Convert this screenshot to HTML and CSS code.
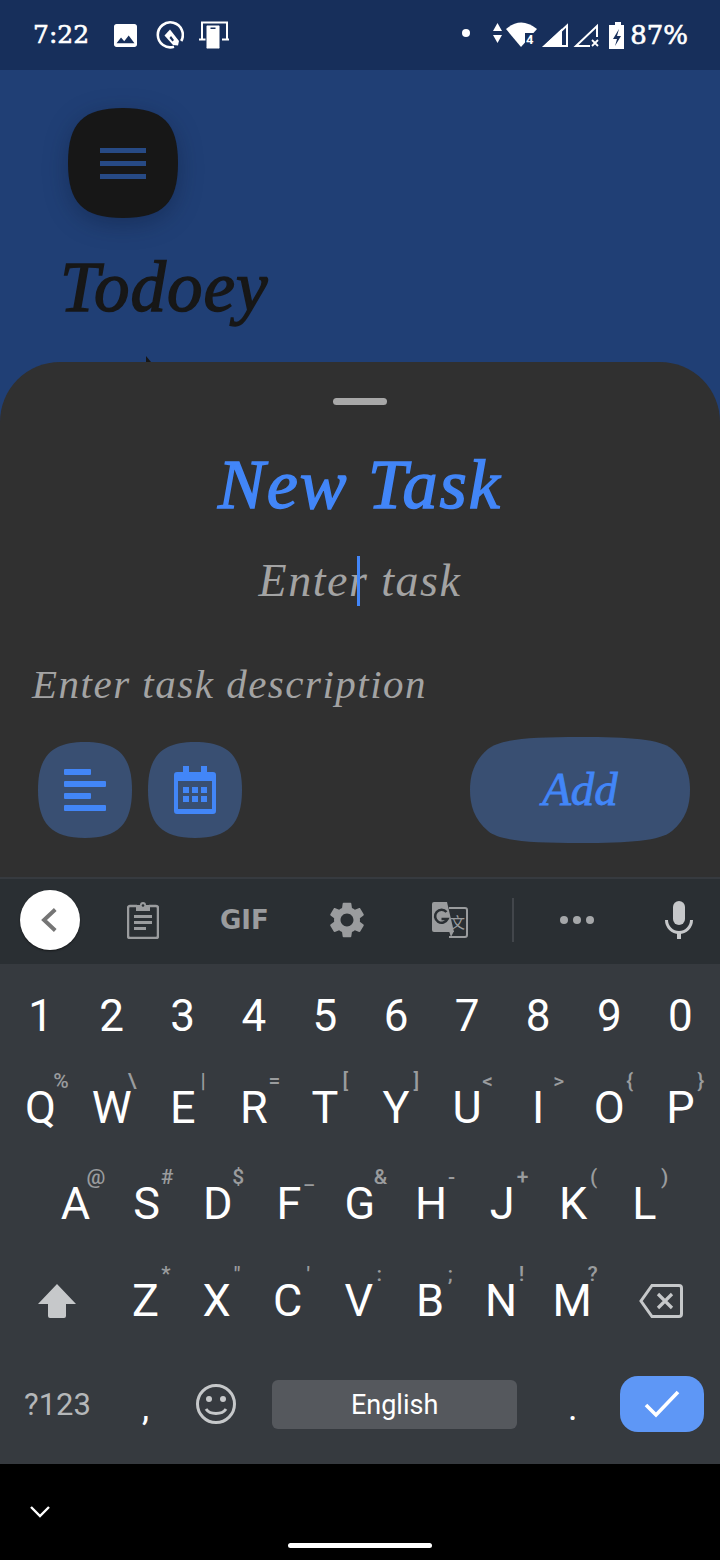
FILE: index.html
```html
<!DOCTYPE html>
<html lang="en">
<head>
  <meta charset="UTF-8">
  <title>Todoey - New Task</title>
  <link rel="stylesheet" href="styles.css">
</head>
<body>
  <div class="screen">
    <div class="status">
      <span class="clock">7:22</span>
      <svg class="st-image" viewBox="3 3 18 18"><path fill="#fff" d="M21 19V5c0-1.1-.9-2-2-2H5c-1.100 0-2 .9-2 2v14c0 1.100.9 2 2 2h14c1.100 0 2-.9 2-2zM8.500 13.500l2.500 3.010L14.500 12l4.500 6H5l3.500-4.500z"/></svg>
      <svg class="st-q" viewBox="0 0 28 28"><path fill="none" stroke="#fff" stroke-width="2.600" d="M18 25.800A12.500 12.500 0 1 1 25.200 20"/><path fill="#fff" d="M8.500 14.500L14 8.500 23 20l-1 4.500-5-.5z"/><path fill="#172f5b" d="M15 15l3 4-1.500 1.500-3-3.500z"/></svg>
      <svg class="st-cast" viewBox="0 0 30 28"><path fill="none" stroke="#fff" stroke-width="2" d="M3 18V1.500h25V18"/><path fill="#fff" d="M0 17.500h7v2H0zM23 17.500h7v2h-7z"/><rect x="7" y="4" width="14" height="24" rx="1.500" fill="#fff" stroke="#172f5b"/><rect x="11.500" y="6.500" width="5" height="1.500" fill="#172f5b"/></svg>
      <svg class="st-right" viewBox="0 0 175 30">
        <circle cx="10" cy="13" r="4" fill="#fff"/>
        <path fill="#fff" d="M37 11l4.500-8 4.500 8zM37 15h9l-4.500 8z"/>
        <path fill="#fff" d="M50 9Q65-4 81 9L65 27z"/>
        <path fill="#172f5b" d="M69 13h12v12H69z"/>
        <text class="st-four" x="70" y="24">4</text>
        <path fill="none" stroke="#fff" stroke-width="2" d="M89 26L111 5.500V26z"/>
        <path fill="#fff" d="M86 27L106 8.500V27z"/>
        <path fill="none" stroke="#fff" stroke-width="2" d="M120 26L141 6v20z"/>
        <path fill="#172f5b" d="M134 17h9v10h-9z"/>
        <path stroke="#fff" stroke-width="1.800" d="M136 20l6 6M142 20l-6 6"/>
        <path fill="#fff" fill-rule="evenodd" d="M159 2h6v3h3v24h-15V5h6zM163 9l-6 10h4l-2 7 6-10h-4z"/>
      </svg>
      <span class="battery">87%</span>
    </div>

    <div class="app">
      <div class="menu-shadow">
        <div class="menu-btn">
          <span class="bar"></span><span class="bar"></span><span class="bar"></span>
        </div>
      </div>
      <h1 class="app-title">Todoey</h1>
      <div class="peek"></div>
    </div>

    <div class="sheet">
      <div class="handle"></div>
      <h2 class="sheet-title">New Task</h2>
      <div class="task-input">Enter<span class="caret"></span> task</div>
      <div class="desc-input">Enter task description</div>
      <div class="actions">
        <div class="small-btn">
          <svg class="icon-lines" viewBox="0 0 42 42"><path fill="#4286f8" d="M1 0h25a1 1 0 0 1 1 1v4a1 1 0 0 1-1 1H1a1 1 0 0 1-1-1V1a1 1 0 0 1 1-1zM1 12h40a1 1 0 0 1 1 1v4a1 1 0 0 1-1 1H1a1 1 0 0 1-1-1v-4a1 1 0 0 1 1-1zM1 24h25a1 1 0 0 1 1 1v4a1 1 0 0 1-1 1H1a1 1 0 0 1-1-1v-4a1 1 0 0 1 1-1zM1 36h40a1 1 0 0 1 1 1v4a1 1 0 0 1-1 1H1a1 1 0 0 1-1-1v-4a1 1 0 0 1 1-1z"/></svg>
        </div>
        <div class="small-btn">
          <svg class="icon-cal" viewBox="0 0 42 48"><path fill="#4286f8" fill-rule="evenodd" d="M9 0h6v6h12V0h6v6h6a3 3 0 0 1 3 3v36a3 3 0 0 1-3 3H3a3 3 0 0 1-3-3V9a3 3 0 0 1 3-3h6zM4 15v28h34V15zM9 21h6v6H9zM18 21h6v6h-6zM27 21h6v6h-6zM9 30h6v6H9zM18 30h6v6h-6zM27 30h6v6h-6z"/></svg>
        </div>
        <div class="add-btn">Add</div>
      </div>
    </div>

    <div class="keyboard">
      <div class="strip">
        <div class="back"><svg viewBox="0 0 24 24"><path fill="none" stroke="#757575" stroke-width="2.600" d="M15.500 5l-7.500 7 7.500 7"/></svg></div>
        <svg class="i-clip" viewBox="0 0 32 38"><path fill="none" stroke="#9a9c9e" stroke-width="2.500" d="M10 5H3a2 2 0 0 0-2 2v28a2 2 0 0 0 2 2h26a2 2 0 0 0 2-2V7a2 2 0 0 0-2-2h-7"/><path fill="#9a9c9e" d="M9 4h4a3 3 0 0 1 6 0h4v6H9zM7 14h18v3H7zM7 20h18v3H7zM7 26h12v3H7z"/><circle cx="16" cy="4.500" r="1.300" fill="#2a2f33"/></svg>
        <span class="gif">GIF</span>
        <svg class="i-gear" viewBox="2 2 20 20"><path fill="#9a9c9e" d="M19.140 12.940c.04-.3.060-.61.060-.94 0-.32-.02-.64-.07-.94l2.030-1.580c.18-.14.230-.41.120-.61l-1.920-3.320c-.12-.22-.37-.29-.59-.22l-2.390.96c-.5-.38-1.030-.7-1.620-.94l-.36-2.540c-.04-.24-.24-.41-.48-.41h-3.840c-.24 0-.43.170-.47.410l-.36 2.540c-.59.240-1.130.57-1.620.94l-2.390-.96c-.22-.08-.47 0-.59.220L2.740 8.870c-.12.210-.08.470.12.610l2.030 1.580c-.05.3-.09.630-.09.940s.02.640.07.940l-2.030 1.580c-.18.140-.23.410-.12.610l1.920 3.320c.12.220.37.290.59.220l2.390-.96c.5.380 1.030.7 1.620.94l.36 2.540c.05.240.24.410.48.410h3.840c.24 0 .44-.17.470-.41l.36-2.540c.59-.24 1.130-.56 1.620-.94l2.390.96c.22.080.47 0 .59-.22l1.920-3.320c.12-.22.070-.47-.12-.61l-2.010-1.580zM12 15.600c-1.980 0-3.600-1.620-3.600-3.600s1.620-3.600 3.600-3.600 3.600 1.620 3.600 3.600-1.620 3.600-3.600 3.600z"/></svg>
        <svg class="i-trans" viewBox="0 0 36 36"><path fill="none" stroke="#9a9c9e" stroke-width="2" d="M17 6h16a2 2 0 0 1 2 2v25a2 2 0 0 1-2 2H17"/><path fill="#9a9c9e" d="M2 0h13l7 30H2a2 2 0 0 1-2-2V2a2 2 0 0 1 2-2z"/><path fill="#9a9c9e" d="M17 29h5l-3 6z"/><path fill="none" stroke="#2a2f33" stroke-width="2.600" d="M14.500 10A6.500 6.500 0 1 0 15.500 17H9.500"/><text class="i-trans-x" x="18" y="26">文</text></svg>
        <span class="divider"></span>
        <svg class="i-dots" viewBox="0 0 34 8"><circle cx="4" cy="4" r="4" fill="#a5a7a9"/><circle cx="17" cy="4" r="4" fill="#a5a7a9"/><circle cx="30" cy="4" r="4" fill="#a5a7a9"/></svg>
        <svg class="i-mic" viewBox="0 0 28 38"><rect x="8" y="0" width="12" height="24" rx="6" fill="#c6c8ca"/><path fill="none" stroke="#c6c8ca" stroke-width="3" d="M1.500 19a12.500 12.500 0 0 0 25 0"/><path fill="#c6c8ca" d="M12 30h4v8h-4z"/></svg>
      </div>

      <div class="keys">
        <div class="row row-num">
          <div class="key">1</div><div class="key">2</div><div class="key">3</div><div class="key">4</div><div class="key">5</div>
          <div class="key">6</div><div class="key">7</div><div class="key">8</div><div class="key">9</div><div class="key">0</div>
        </div>
        <div class="row row-q">
          <div class="key">Q<span class="hint">%</span></div>
          <div class="key">W<span class="hint">\</span></div>
          <div class="key">E<span class="hint">|</span></div>
          <div class="key">R<span class="hint">=</span></div>
          <div class="key">T<span class="hint">[</span></div>
          <div class="key">Y<span class="hint">]</span></div>
          <div class="key">U<span class="hint">&lt;</span></div>
          <div class="key">I<span class="hint">&gt;</span></div>
          <div class="key">O<span class="hint">{</span></div>
          <div class="key">P<span class="hint">}</span></div>
        </div>
        <div class="row row-a">
          <div class="key">A<span class="hint">@</span></div>
          <div class="key">S<span class="hint">#</span></div>
          <div class="key">D<span class="hint">$</span></div>
          <div class="key">F<span class="hint">_</span></div>
          <div class="key">G<span class="hint">&amp;</span></div>
          <div class="key">H<span class="hint">-</span></div>
          <div class="key">J<span class="hint">+</span></div>
          <div class="key">K<span class="hint">(</span></div>
          <div class="key">L<span class="hint">)</span></div>
        </div>
        <div class="row row-z">
          <svg class="i-shift" viewBox="0 0 38 34"><path fill="#c6c8ca" d="M19 0l19 20H28v12a2 2 0 0 1-2 2H12a2 2 0 0 1-2-2V20H0z"/></svg>
          <div class="key">Z<span class="hint">*</span></div>
          <div class="key">X<span class="hint">"</span></div>
          <div class="key">C<span class="hint">'</span></div>
          <div class="key">V<span class="hint">:</span></div>
          <div class="key">B<span class="hint">;</span></div>
          <div class="key">N<span class="hint">!</span></div>
          <div class="key">M<span class="hint">?</span></div>
          <svg class="i-del" viewBox="0 0 44 34"><path fill="none" stroke="#c6c8ca" stroke-width="3" d="M13 1.500h27a2.500 2.500 0 0 1 2.500 2.500v26a2.500 2.500 0 0 1-2.500 2.500H13L2 17z"/><path fill="none" stroke="#c6c8ca" stroke-width="3.200" d="M19 10l14 14M33 10L19 24"/></svg>
        </div>
        <div class="row row-bottom">
          <span class="sym">?123</span>
          <span class="comma">,</span>
          <svg class="i-emoji" viewBox="0 0 40 40"><circle cx="20" cy="20" r="18.500" fill="none" stroke="#c6c8ca" stroke-width="3"/><circle cx="13" cy="15" r="3" fill="#c6c8ca"/><circle cx="27" cy="15" r="3" fill="#c6c8ca"/><path fill="none" stroke="#c6c8ca" stroke-width="3" d="M10 25c4 6 16 6 20 0"/></svg>
          <div class="space">English</div>
          <span class="period">.</span>
          <div class="enter"><svg viewBox="0 0 36 28"><path fill="none" stroke="#fff" stroke-width="3.600" d="M2 15l10 10L34 2"/></svg></div>
        </div>
      </div>
    </div>

    <div class="nav">
      <svg class="nav-down" viewBox="0 0 20 12"><path fill="none" stroke="#fff" stroke-width="2.400" d="M1 1l9 9 9-9"/></svg>
      <div class="pill"></div>
    </div>
  </div>
</body>
</html>
```

FILE: styles.css
```css
* {
  box-sizing: border-box;
}

body {
  margin: 0;
  background-color: #000;
  font-family: Roboto, sans-serif;
}

.screen {
  width: 720px;
  height: 1560px;
  overflow: hidden;
  background-color: #203f75;
}

/* status bar */
.status {
  height: 70px;
  display: flex;
  align-items: center;
  padding-left: 33px;
  background-color: #172f5b;
  color: #fff;
}

.clock, .battery {
  font-family: "DejaVu Serif", serif;
  font-size: 25px;
  line-height: 70px;
  -webkit-text-stroke: 0.6px #fff;
}

.st-image {
  width: 23px;
  height: 23px;
  margin-left: 25px;
}

.st-q {
  width: 28px;
  height: 28px;
  margin-left: 19px;
}

.st-cast {
  width: 30px;
  height: 28px;
  margin-left: 15px;
}

.st-right {
  width: 175px;
  height: 30px;
  margin-left: 227px;
}

.st-four {
  font-family: Roboto, sans-serif;
  font-size: 13px;
  font-weight: 700;
  fill: #fff;
}

.battery {
  margin-left: -1px;
  font-size: 26px;
}

/* app behind the sheet */
.app {
  height: 292px;
  overflow: hidden;
  padding: 38px 0 0 68px;
}

.menu-shadow {
  width: 110px;
  height: 110px;
  filter: drop-shadow(0 6px 12px rgba(10, 20, 45, 0.35));
}

.menu-btn {
  width: 110px;
  height: 110px;
  display: flex;
  flex-direction: column;
  align-items: center;
  justify-content: center;
  gap: 8px;
  background-color: #171717;
  clip-path: path("M55 0C95 0 110 15 110 55C110 95 95 110 55 110C15 110 0 95 0 55C0 15 15 0 55 0Z");
}

.bar {
  width: 46px;
  height: 5px;
  background-color: #274a85;
}

.app-title {
  margin: 26px 0 0 -8px;
  font-family: "Liberation Serif", serif;
  font-style: italic;
  font-weight: 400;
  font-size: 71px;
  line-height: 86px;
  letter-spacing: 1px;
  -webkit-text-stroke: 1.5px #171717;
  color: #171717;
}

.peek {
  width: 5px;
  height: 6px;
  margin: 26px 0 0 78px;
  background-color: #171717;
  clip-path: polygon(0 0, 100% 100%, 0 100%);
}

/* bottom sheet */
.sheet {
  height: 515px;
  padding-top: 36px;
  background-color: #303030;
  border-radius: 60px 60px 0 0;
  text-align: center;
}

.handle {
  width: 54px;
  height: 7px;
  margin: 0 auto;
  border-radius: 4px;
  background-color: #a8a8a8;
}

.sheet-title {
  margin: 38px 0 0;
  font-family: "Liberation Serif", serif;
  font-style: italic;
  font-weight: 400;
  font-size: 70px;
  line-height: 84px;
  letter-spacing: 2px;
  -webkit-text-stroke: 1.5px #4286f8;
  color: #4286f8;
}

.task-input {
  margin-top: 29px;
  height: 50px;
  font-family: "Liberation Serif", serif;
  font-style: italic;
  font-size: 46px;
  line-height: 50px;
  letter-spacing: 1.500px;
  color: #a3a3a3;
}

.caret {
  display: inline-block;
  width: 3px;
  height: 50px;
  margin: 0 8px 0 -11px;
  vertical-align: top;
  background-color: #4286f8;
}

.desc-input {
  margin-top: 52px;
  padding-left: 32px;
  text-align: left;
  font-family: "Liberation Serif", serif;
  font-style: italic;
  font-size: 41px;
  line-height: 52px;
  letter-spacing: 1.500px;
  color: #a3a3a3;
}

.actions {
  display: flex;
  align-items: center;
  gap: 16px;
  margin-top: 27px;
  padding: 0 30px 0 38px;
}

.small-btn {
  width: 94px;
  height: 96px;
  display: flex;
  align-items: center;
  justify-content: center;
  background-color: #394f72;
  clip-path: path("M47 0C80 0 94 14 94 48C94 82 80 96 47 96C14 96 0 82 0 48C0 14 14 0 47 0Z");
}

.icon-lines {
  width: 42px;
  height: 42px;
}

.icon-cal {
  width: 42px;
  height: 48px;
}

.add-btn {
  width: 220px;
  height: 106px;
  margin-left: auto;
  background-color: #394f72;
  clip-path: path("M110 0C160 0 190 2 202 12C216 24 220 38 220 53C220 68 216 82 202 94C190 104 160 106 110 106C60 106 30 104 18 94C4 82 0 68 0 53C0 38 4 24 18 12C30 2 60 0 110 0Z");
  font-family: "Liberation Serif", serif;
  font-style: italic;
  font-weight: 400;
  font-size: 47px;
  line-height: 104px;
  -webkit-text-stroke: 0.8px #4286f8;
  color: #4286f8;
}

/* keyboard */
.keyboard {
  height: 587px;
  background-color: #363a3f;
}

.strip {
  height: 87px;
  display: flex;
  align-items: center;
  padding-bottom: 3px;
  border-top: 2px solid #363a3f;
  background-color: #2a2f33;
}

.back {
  flex: none;
  width: 60px;
  height: 60px;
  margin-left: 20px;
  display: flex;
  align-items: center;
  justify-content: center;
  border-radius: 50%;
  background-color: #fff;
  box-shadow: 0 1px 2px rgba(0, 0, 0, 0.5);
}

.back svg {
  width: 36px;
  height: 36px;
}

.i-clip {
  flex: none;
  width: 32px;
  height: 38px;
  margin-left: 47px;
}

.gif {
  flex: none;
  width: 47px;
  margin-left: 61px;
  font-family: "DejaVu Sans", sans-serif;
  font-weight: 700;
  font-size: 26px;
  letter-spacing: 0;
  color: #9a9c9e;
}

.i-gear {
  flex: none;
  width: 36px;
  height: 36px;
  margin-left: 62px;
}

.i-trans {
  flex: none;
  width: 36px;
  height: 36px;
  margin-left: 67px;
}

.i-trans-x {
  font-family: "Noto Sans CJK SC", sans-serif;
  font-size: 15px;
  fill: #9a9c9e;
}

.divider {
  flex: none;
  width: 2px;
  height: 44px;
  margin-left: 44px;
  background-color: #42464b;
}

.i-dots {
  flex: none;
  width: 34px;
  height: 8px;
  margin-left: 46px;
}

.i-mic {
  flex: none;
  width: 28px;
  height: 38px;
  margin-left: 71px;
}

.keys {
  height: 500px;
}

.row {
  display: flex;
  align-items: center;
  height: 96px;
}

.row-num {
  height: 88px;
  margin-top: 8px;
  padding-left: 5px;
}

.row-q {
  height: 95px;
  padding-left: 5px;
}

.row-a {
  height: 98px;
  padding-left: 40px;
}

.row-z {
  padding-left: 38px;
}

.row-bottom {
  height: 115px;
  padding-bottom: 5px;
}

.key {
  position: relative;
  flex: none;
  width: 71.100px;
  text-align: center;
  font-size: 45px;
  line-height: 56px;
  color: #fff;
}

.row-num .key {
  font-size: 44px;
}

.hint {
  position: absolute;
  left: 42px;
  top: -10px;
  width: 28px;
  text-align: center;
  font-size: 21px;
  font-weight: 500;
  line-height: 22px;
  color: #9a9c9e;
}

.i-shift {
  flex: none;
  width: 38px;
  height: 34px;
  margin-right: 34px;
}

.i-del {
  flex: none;
  width: 44px;
  height: 34px;
  margin-left: 31px;
}

.sym {
  flex: none;
  width: 70px;
  margin-left: 24px;
  font-size: 31px;
  color: #b5b7b9;
}

.comma, .period {
  flex: none;
  font-size: 36px;
  line-height: 36px;
  color: #fff;
}

.comma {
  margin-left: 48px;
  padding-top: 8px;
}

.i-emoji {
  flex: none;
  width: 40px;
  height: 40px;
  margin-left: 47px;
}

.space {
  flex: none;
  width: 245px;
  height: 49px;
  margin-left: 36px;
  border-radius: 6px;
  background-color: #55585d;
  font-size: 27px;
  line-height: 50px;
  text-align: center;
  color: #fff;
}

.period {
  margin-left: 51px;
  padding-top: 8px;
}

.enter {
  flex: none;
  width: 84px;
  height: 56px;
  margin-left: 42px;
  display: flex;
  align-items: center;
  justify-content: center;
  border-radius: 18px;
  background-color: #5e97f6;
}

.enter svg {
  width: 36px;
  height: 28px;
}

/* navigation bar */
.nav {
  height: 96px;
  display: grid;
  grid-template-columns: 288px 144px;
  background-color: #000;
}

.nav-down {
  width: 20px;
  height: 12px;
  margin: 42px 0 0 30px;
}

.pill {
  height: 5px;
  margin-top: 79px;
  border-radius: 3px;
  background-color: #fff;
}
```
